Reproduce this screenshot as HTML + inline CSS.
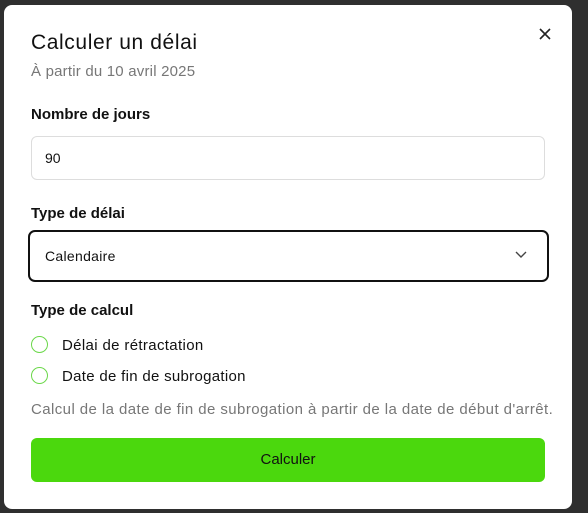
<!DOCTYPE html>
<html><head><meta charset="utf-8"><style>
body{margin:0;width:588px;height:513px;background:#2f2f2f;font-family:"Liberation Sans",sans-serif;position:relative;overflow:hidden}
.d{position:absolute;left:4px;top:5px;width:568px;height:504px;background:#fff;border-radius:8px}
.a{position:absolute;white-space:nowrap}
</style></head><body>
<div class="d"></div>
<div class="a" style="left:31px;top:31px;font-size:21px;letter-spacing:0.6px;color:#111">Calculer un délai</div>
<div class="a" style="left:31px;top:63px;font-size:15px;letter-spacing:0.2px;color:#777">À partir du 10 avril 2025</div>
<svg class="a" style="left:538px;top:27px" width="14" height="14"><path d="M2 2L12 12M12 2L2 12" stroke="#222" stroke-width="1.6"/></svg>
<div class="a" style="left:31px;top:106px;font-size:15px;font-weight:bold;color:#111">Nombre de jours</div>
<div class="a" style="left:31px;top:136px;width:512px;height:42px;border:1px solid #ddd;border-radius:6px"></div>
<div class="a" style="left:45px;top:150px;font-size:14px;color:#111">90</div>
<div class="a" style="left:31px;top:205px;font-size:15px;font-weight:bold;color:#111">Type de délai</div>
<div class="a" style="left:28px;top:230px;width:517px;height:48px;border:2px solid #111;border-radius:7px"></div>
<div class="a" style="left:45px;top:248px;font-size:14px;letter-spacing:0.3px;color:#111">Calendaire</div>
<svg class="a" style="left:515px;top:251px" width="12" height="8"><path d="M1 1L6 6L11 1" stroke="#444" stroke-width="1.4" fill="none"/></svg>
<div class="a" style="left:31px;top:302px;font-size:15px;font-weight:bold;color:#111">Type de calcul</div>
<div class="a" style="left:31px;top:336px;width:15px;height:15px;border:1.5px solid #6bd84a;border-radius:50%"></div>
<div class="a" style="left:31px;top:367px;width:15px;height:15px;border:1.5px solid #6bd84a;border-radius:50%"></div>
<div class="a" style="left:62px;top:337px;font-size:15px;letter-spacing:0.35px;color:#111">Délai de rétractation</div>
<div class="a" style="left:62px;top:368px;font-size:15px;letter-spacing:0.3px;color:#111">Date de fin de subrogation</div>
<div class="a" style="left:31px;top:401px;font-size:15px;letter-spacing:0.42px;color:#777">Calcul de la date de fin de subrogation à partir de la date de début d'arrêt.</div>
<div class="a" style="left:31px;top:438px;width:514px;height:44px;background:#4bd80d;border-radius:6px;text-align:center;line-height:44px;font-size:15px;color:#111">Calculer</div>
</body></html>
